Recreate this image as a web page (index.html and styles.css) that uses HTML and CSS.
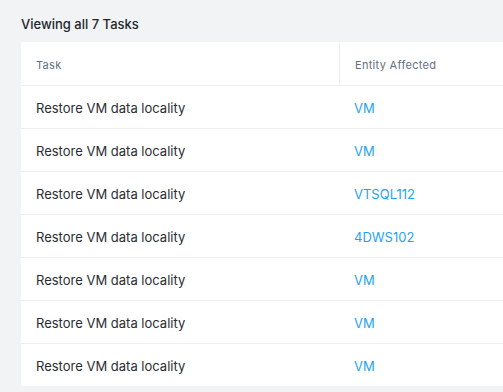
FILE: index.html
```html
<!DOCTYPE html>
<html>
<head>
<meta charset="utf-8">
<link rel="stylesheet" href="styles.css">
</head>
<body>
<div class="page">
  <h1 class="title">Viewing all 7 Tasks</h1>
  <div class="card">
    <div class="row head">
      <div class="cell c1">Task</div>
      <div class="cell c2 divider">Entity Affected</div>
    </div>
    <div class="row"><div class="cell c1">Restore VM data locality</div><div class="cell c2"><a class="link">VM</a></div></div>
    <div class="row"><div class="cell c1">Restore VM data locality</div><div class="cell c2"><a class="link">VM</a></div></div>
    <div class="row"><div class="cell c1">Restore VM data locality</div><div class="cell c2"><a class="link">VTSQL112</a></div></div>
    <div class="row"><div class="cell c1">Restore VM data locality</div><div class="cell c2"><a class="link">4DWS102</a></div></div>
    <div class="row"><div class="cell c1">Restore VM data locality</div><div class="cell c2"><a class="link">VM</a></div></div>
    <div class="row"><div class="cell c1">Restore VM data locality</div><div class="cell c2"><a class="link">VM</a></div></div>
    <div class="row last"><div class="cell c1">Restore VM data locality</div><div class="cell c2"><a class="link">VM</a></div></div>
  </div>
</div>
</body>
</html>
```
FILE: styles.css
```css
html, body {
  margin: 0;
  padding: 0;
  background: #f2f3f5;
  font-family: "Inter", "Liberation Sans", sans-serif;
  overflow: hidden;
}
.page {
  padding: 14px 0 0 21px;
}
.title {
  margin: 0;
  font-size: 13px;
  font-weight: 500;
  color: #22272e;
  line-height: 20px;
  height: 28px;
}
.card {
  background: #ffffff;
  border-radius: 2px 0 0 2px;
}
.row {
  display: flex;
  height: 42px;
  border-bottom: 1px solid #eceef1;
  align-items: stretch;
}
.row.head {
  height: 43px;
}
.row.last {
  border-bottom: none;
}
.cell {
  display: flex;
  align-items: center;
  padding-left: 15px;
  padding-top: 2px;
  font-size: 13px;
  color: #2a2d31;
}
.c1 {
  width: 303px;
}
.c2 {
  flex: 1;
}
.head .cell {
  font-size: 11px;
  color: #627080;
  letter-spacing: 0.3px;
  padding-top: 3px;
}
.divider {
  border-left: 1px solid #eceef1;
}
.link {
  color: #1fa3f5;
  text-decoration: none;
}
```
